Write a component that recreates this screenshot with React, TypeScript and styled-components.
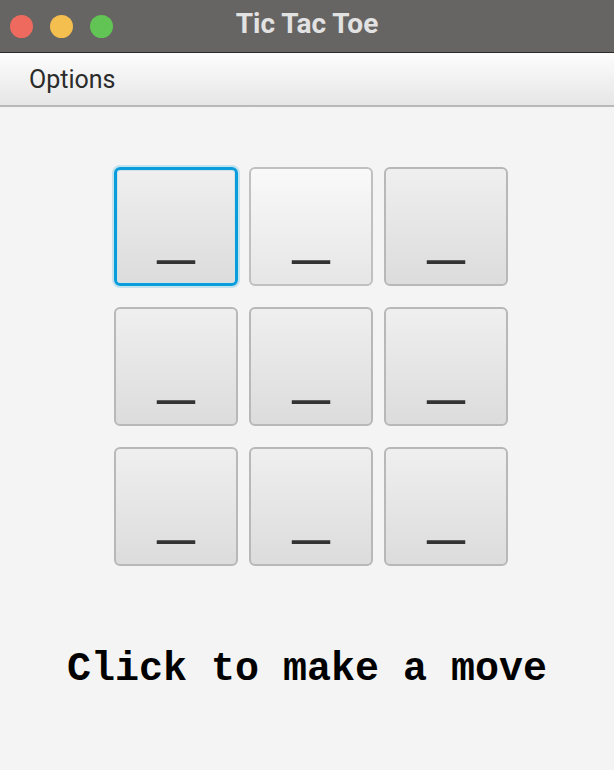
import React from "react";
import styled, { createGlobalStyle, css } from "styled-components";

const Global = createGlobalStyle`
  html, body { margin: 0; padding: 0; background: #f4f4f4; }
  body { width: 614px; height: 770px; overflow: hidden; }
`;

const Window = styled.div`
  width: 614px;
  height: 770px;
  display: flex;
  flex-direction: column;
  background: #f4f4f4;
  font-family: Roboto, "Liberation Sans", sans-serif;
`;

const TitleBar = styled.div`
  height: 52px;
  flex: none;
  background: #676563;
  border-bottom: 1px solid #2a2a2a;
  display: flex;
  align-items: center;
  position: relative;
`;

const Lights = styled.div`
  display: flex;
  gap: 17px;
  padding-left: 10px;
`;

const Light = styled.span<{ $c: string }>`
  width: 23px;
  height: 23px;
  border-radius: 50%;
  background: ${(p) => p.$c};
`;

const Title = styled.div`
  position: absolute;
  left: 0;
  right: 0;
  top: 0;
  bottom: 0;
  display: flex;
  align-items: center;
  justify-content: center;
  padding-bottom: 5px;
  color: #e2e2e2;
  font-weight: 700;
  font-size: 28px;
  pointer-events: none;
`;

const MenuBar = styled.div`
  height: 52px;
  flex: none;
  background: linear-gradient(#fdfdfd, #e6e6e6);
  border-bottom: 2px solid #b9b9b9;
  display: flex;
  align-items: center;
  padding-left: 29px;
`;

const MenuItem = styled.span`
  font-size: 25px;
  color: #2b2b2b;
  margin-top: 1px;
`;

const Content = styled.div`
  flex: 1;
  display: flex;
  flex-direction: column;
  align-items: center;
  padding-top: 60px;
`;

const Grid = styled.div`
  display: grid;
  grid-template-columns: repeat(3, 124px);
  grid-auto-rows: 119px;
  column-gap: 11px;
  row-gap: 21px;
  margin-left: 8px;
`;

const Mark = styled.span`
  font-family: "DejaVu Sans", sans-serif;
  font-size: 74px;
  line-height: 1;
  color: #333;
  margin-bottom: 23px;
  height: 74px;
  display: block;
  transform: scaleY(0.75);
  transform-origin: 50% 88%;
`;

const Cell = styled.button<{ $focused?: boolean; $hover?: boolean }>`
  box-sizing: border-box;
  margin: 0;
  padding: 0;
  border: 2px solid #b8b8b8;
  border-radius: 6px;
  background: linear-gradient(#efefef, #dcdcdc);
  display: flex;
  align-items: flex-end;
  justify-content: center;
  overflow: hidden;
  ${(p) =>
    p.$hover &&
    css`
      background: linear-gradient(#f9f9f9, #e6e6e6);
      border-color: #c0c0c0;
    `}
  ${(p) =>
    p.$focused &&
    css`
      border: 3px solid #0a9ddb;
      box-shadow: 0 0 0 2px rgba(10, 157, 219, 0.2),
        inset 0 0 0 1px #d2e2ea;
      ${Mark} {
        margin-bottom: 22px;
      }
    `}
`;

const Status = styled.div`
  margin-top: 81px;
  font-family: "Liberation Mono", "Courier New", monospace;
  font-weight: 700;
  font-size: 40px;
  color: #000;
`;

export default function App() {
  const cells = Array.from({ length: 9 }, (_, i) => i);
  return (
    <Window>
      <Global />
      <TitleBar>
        <Lights>
          <Light $c="#ee6a5e" />
          <Light $c="#f5bf4f" />
          <Light $c="#61c454" />
        </Lights>
        <Title>Tic Tac Toe</Title>
      </TitleBar>
      <MenuBar>
        <MenuItem>Options</MenuItem>
      </MenuBar>
      <Content>
        <Grid>
          {cells.map((i) => (
            <Cell key={i} $focused={i === 0} $hover={i === 1}>
              <Mark>_</Mark>
            </Cell>
          ))}
        </Grid>
        <Status>Click to make a move</Status>
      </Content>
    </Window>
  );
}
